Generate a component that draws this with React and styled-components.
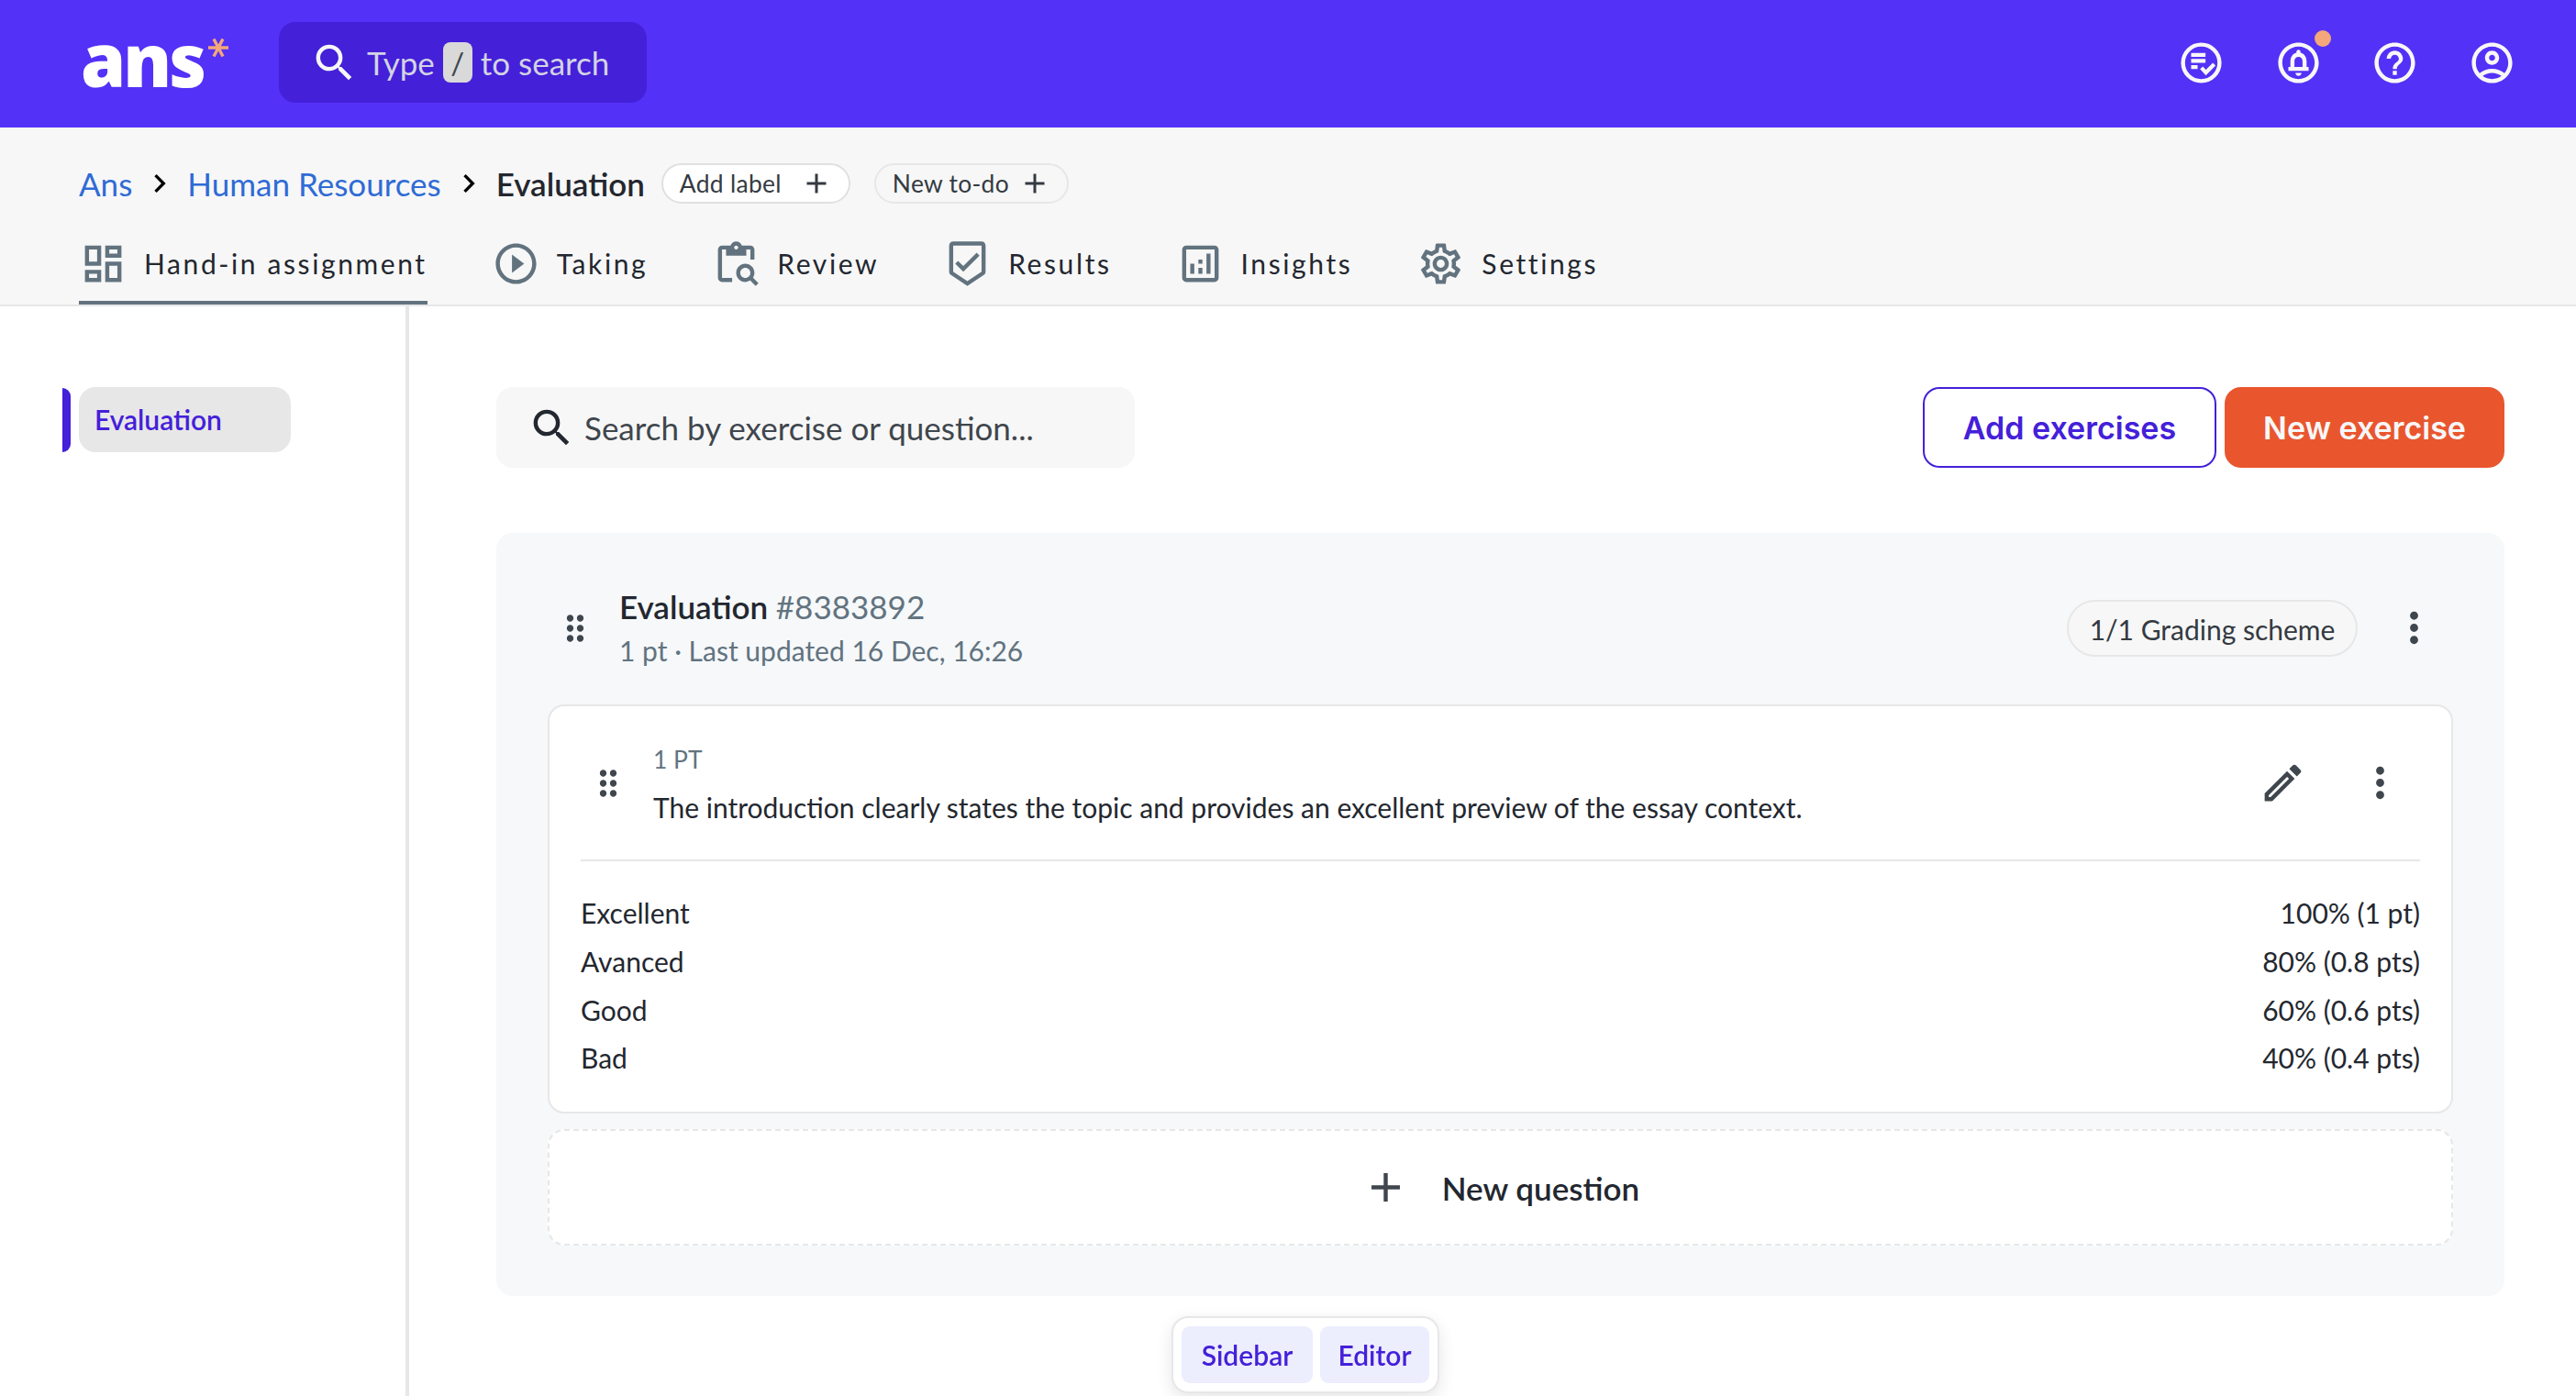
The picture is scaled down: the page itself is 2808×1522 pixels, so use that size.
import styled, { createGlobalStyle } from 'styled-components'
import {
	MdSearch,
	MdOutlineCircleNotifications,
	MdHelpOutline,
	MdOutlineAccountCircle,
	MdChevronRight,
	MdAdd,
	MdOutlineDashboard,
	MdPlayCircleOutline,
	MdOutlineSettings,
	MdDragIndicator,
	MdMoreVert,
	MdOutlineEdit,
} from 'react-icons/md'

const GlobalStyle = createGlobalStyle`
	* {
		box-sizing: border-box;
	}
	body {
		margin: 0;
		background: #fff;
		color: #23272f;
		font-family: Lato, "Open Sans", sans-serif;
		font-size: 30px;
		overflow: hidden;
	}
	svg {
		display: block;
		flex: none;
	}
	button {
		font: inherit;
		color: inherit;
		padding: 0;
		white-space: nowrap;
	}
`

const Page = styled.div`
	display: flex;
	flex-direction: column;
	height: 1522px;
`

/* top bar */
const TopBar = styled.header`
	display: flex;
	align-items: center;
	height: 139px;
	flex: none;
	padding: 0 65px 3px 88px;
	background: #5331f7;
	color: #f7f7f7;
`
const Logo = styled.div`
	display: flex;
	align-items: flex-start;
	gap: 9px;
	width: 216px;
	height: 88px;
`
const LogoText = styled.span`
	width: 130px;
	font-family: "Open Sans", sans-serif;
	font-size: 79px;
	font-weight: 800;
	line-height: 82px;
	letter-spacing: -3px;
	color: #fff;
`
const Star = styled.svg`
	width: 22px;
	height: 22px;
	margin-top: 17px;
	stroke: #f3a77a;
	stroke-width: 3.4;
`
const GlobalSearch = styled.div`
	display: flex;
	align-items: center;
	width: 401px;
	height: 88px;
	padding-left: 34px;
	border-radius: 18px;
	background: #4420d9;
	font-size: 35px;
	white-space: nowrap;
`
const Hint = styled.span`
	margin-left: ${p => p.$left}px;
	letter-spacing: ${p => p.$track}px;
	color: #d3d3e2;
`
const Key = styled.kbd`
	display: flex;
	align-items: center;
	justify-content: center;
	width: 32px;
	height: 44px;
	margin-left: 9px;
	border-radius: 8px;
	background: #d9d9d9;
	color: #3f464d;
	font-family: inherit;
	font-size: 33px;
`
const Actions = styled.div`
	display: flex;
	gap: 52.6px;
	margin-left: auto;
`
const Action = styled.div`
	position: relative;
`
const Badge = styled.span`
	position: absolute;
	top: -9px;
	right: -9px;
	width: 18px;
	height: 18px;
	border-radius: 50%;
	background: #f3a77a;
`

/* breadcrumb and tabs */
const SubHeader = styled.div`
	flex: none;
	height: 195px;
	padding: 39px 86px 0;
	background: #f7f7f7;
	border-bottom: 2px solid #e7e7e7;
`
const Crumbs = styled.nav`
	display: flex;
	align-items: center;
	gap: 10px;
	height: 44px;
	font-size: 35px;
	color: #000;
	white-space: nowrap;
`
const Crumb = styled.span`
	color: ${p => p.$current ? '#23272f' : '#2f6bd6'};
	font-weight: ${p => p.$current ? 600 : 400};
	letter-spacing: ${p => p.$track}px;
`
const Pill = styled.button`
	display: flex;
	align-items: center;
	justify-content: space-between;
	width: ${p => p.$w}px;
	height: 44px;
	margin-left: ${p => p.$left}px;
	padding: 0 17px 0 18px;
	border: 2px solid ${p => p.$plain ? '#e7e7e7' : '#e0e0e0'};
	border-radius: 22px;
	background: ${p => p.$plain ? '#f7f7f7' : '#fff'};
	color: #343a41;
	font-size: 26.4px;
	letter-spacing: 0.3px;
`
const Tabs = styled.div`
	display: flex;
	gap: 70px;
	height: 86px;
	margin-top: 24px;
`
const Tab = styled.div`
	display: flex;
	align-items: center;
	gap: 18px;
	border-bottom: 4px solid ${p => p.$active ? '#62737f' : 'transparent'};
	letter-spacing: 2.6px;
	white-space: nowrap;
	svg {
		color: #62737f;
	}
`

/* body */
const Body = styled.div`
	display: flex;
	flex: 1;
`
const Sidebar = styled.aside`
	width: 446px;
	padding: 88px 0 0 68px;
	border-right: 4px solid #e7e7e7;
`
const SideRow = styled.div`
	display: flex;
	align-items: center;
	gap: 9px;
`
const Marker = styled.div`
	width: 9px;
	height: 70px;
	border-radius: 0 9px 9px 0;
	background: #4420d9;
`
const SideItem = styled.div`
	width: 231px;
	height: 71px;
	padding-left: 17px;
	border-radius: 18px;
	background: #e7e7e7;
	color: #4420d9;
	font-weight: 600;
	line-height: 71px;
`
const Main = styled.main`
	flex: 1;
	padding: 88px 78px 0 95px;
`
const Toolbar = styled.div`
	display: flex;
	align-items: center;
	gap: 9px;
`
const SearchField = styled.div`
	display: flex;
	align-items: center;
	gap: 9px;
	width: 696px;
	height: 88px;
	margin-right: auto;
	padding-left: 34px;
	border-radius: 18px;
	background: #f7f7f7;
	font-size: 35px;
	span {
		color: #3f464d;
	}
`
const Button = styled.button`
	width: ${p => p.$w}px;
	height: 88px;
	border: 2px solid ${p => p.$primary ? '#e9562e' : '#4420d9'};
	border-radius: 18px;
	background: ${p => p.$primary ? '#e9562e' : '#fff'};
	color: ${p => p.$primary ? '#f7f7f7' : '#4420d9'};
	font-family: Inter, sans-serif;
	font-size: 34px;
	font-weight: 600;
`
const Exercise = styled.section`
	height: 832px;
	margin-top: 71px;
	padding: 0 56px;
	border-radius: 18px;
	background: #f6f8fa;
`
const ExerciseHead = styled.div`
	display: flex;
	align-items: center;
	height: 187px;
	padding: 20px 16px 0 8px;
	color: #3f464d;
`
const Heading = styled.div`
	flex: 1;
	margin-left: 26px;
	line-height: 48px;
`
const Title = styled.div`
	font-size: 35px;
	font-weight: 600;
	color: #23272f;
	span {
		font-weight: 400;
		color: #62737f;
	}
`
const Meta = styled.div`
	color: #62737f;
`
const Scheme = styled.div`
	width: 317px;
	height: 62px;
	margin-right: 35px;
	border: 2px solid #e7e7e7;
	border-radius: 31px;
	background: #f7f7f7;
	color: #343a41;
	line-height: 60px;
	text-align: center;
`
const Card = styled.div`
	height: 446px;
	padding: 0 34px;
	border: 2px solid #e7e7e7;
	border-radius: 18px;
	background: #fff;
`
const QuestionHead = styled.div`
	display: flex;
	align-items: center;
	height: 169px;
	padding: 0 17px 0 8px;
	border-bottom: 2px solid #e7e7e7;
	color: #3f464d;
`
const QuestionText = styled.div`
	flex: 1;
	margin-left: 27px;
	color: #23272f;
	line-height: 52px;
`
const Points = styled.div`
	font-size: 26.4px;
	color: #62737f;
`
const CardActions = styled.div`
	display: flex;
	gap: 53px;
`
const Levels = styled.div`
	padding-top: 30px;
`
const Level = styled.div`
	display: flex;
	justify-content: space-between;
	line-height: 52.8px;
`
const NewQuestion = styled.button`
	display: flex;
	align-items: center;
	justify-content: center;
	gap: 35px;
	width: 100%;
	height: 127px;
	margin-top: 17px;
	border: 2px dashed #e7e7e7;
	border-radius: 18px;
	background: #fff;
	font-size: 35px;
	font-weight: 600;
	svg {
		color: #3f464d;
	}
`
const Switcher = styled.div`
	position: fixed;
	left: 1277px;
	bottom: 3px;
	display: flex;
	gap: 8px;
	padding: 9px;
	border: 2px solid #e7e7e7;
	border-radius: 18px;
	background: #fff;
	box-shadow: 0 6px 18px rgba(0, 0, 0, 0.1);
`
const Switch = styled.button`
	width: ${p => p.$w}px;
	height: 62px;
	border: 0;
	border-radius: 9px;
	background: #ecedfd;
	color: #4420d9;
	font-weight: 600;
`

const TodoIcon = () => (
	<svg width="53" height="53" viewBox="0 0 24 24" fill="none" stroke="currentColor" strokeWidth="1.9">
		<circle cx="12" cy="12" r="9" strokeWidth="2" />
		<path d="M7 8.1h7.1M7 11h7.1M7 14.1h3.2M12.1 14.4l2.2 2.4 4.1-4.1" />
	</svg>
)

const ReviewIcon = () => (
	<svg width="53" height="53" viewBox="0 0 24 24" fill="currentColor">
		<path d="M5 5h2v3h10V5h2v5h2V5c0-1.1-.9-2-2-2h-4.18C14.4 1.84 13.3 1 12 1s-2.4.84-2.82 2H5c-1.1 0-2 .9-2 2v14c0 1.1.9 2 2 2h5v-2H5V5zm7-2c.55 0 1 .45 1 1s-.45 1-1 1-1-.45-1-1 .45-1 1-1z" />
		<path d="M20.3 18.9c.4-.7.7-1.5.7-2.4 0-2.5-2-4.5-4.5-4.5S12 14 12 16.5s2 4.5 4.5 4.5c.9 0 1.7-.3 2.4-.7l2.7 2.7 1.4-1.4-2.7-2.7zm-3.8.1c-1.4 0-2.5-1.1-2.5-2.5s1.1-2.5 2.5-2.5 2.5 1.1 2.5 2.5-1.1 2.5-2.5 2.5z" />
	</svg>
)

const ResultsIcon = () => (
	<svg width="53" height="53" viewBox="0 0 24 24" fill="currentColor">
		<path d="M19 1H5c-1.1 0-1.99.9-1.99 2L3 15.93c0 .69.35 1.3.88 1.66L12 23l8.11-5.41c.53-.36.88-.97.88-1.66L21 3c0-1.1-.9-2-2-2zm-7 19.6l-7-4.66V3h14v12.93l-7 4.67zm-2.01-7.42l-2.58-2.59L6 12l4 4 8-8-1.42-1.42z" />
	</svg>
)

const InsightsIcon = () => (
	<svg width="53" height="53" viewBox="0 0 24 24" fill="currentColor">
		<path d="M19 3H5c-1.1 0-2 .9-2 2v14c0 1.1.9 2 2 2h14c1.1 0 2-.9 2-2V5c0-1.1-.9-2-2-2zm0 16H5V5h14v14z" />
		<path d="M7 12h2v5H7zM15 7h2v10h-2zM11 14h2v3h-2zM11 10h2v2h-2z" />
	</svg>
)

const tabs = [
	{ name: 'Hand-in assignment', icon: MdOutlineDashboard },
	{ name: 'Taking', icon: MdPlayCircleOutline },
	{ name: 'Review', icon: ReviewIcon },
	{ name: 'Results', icon: ResultsIcon },
	{ name: 'Insights', icon: InsightsIcon },
	{ name: 'Settings', icon: MdOutlineSettings },
]

const levels = [
	['Excellent', '100% (1 pt)'],
	['Avanced', '80% (0.8 pts)'],
	['Good', '60% (0.6 pts)'],
	['Bad', '40% (0.4 pts)'],
]

const Header = () => (
	<TopBar>
		<Logo>
			<LogoText>ans</LogoText>
			<Star viewBox="0 0 22 22">
				<path d="M0 11h22M6 1.5l10 19M16 1.5l-10 19" />
			</Star>
		</Logo>
		<GlobalSearch>
			<MdSearch size={53} />
			<Hint $left={9} $track={0}>Type</Hint>
			<Key>/</Key>
			<Hint $left={9} $track={0}>to search</Hint>
		</GlobalSearch>
		<Actions>
			<Action><TodoIcon /></Action>
			<Action><MdOutlineCircleNotifications size={53} /><Badge /></Action>
			<Action><MdHelpOutline size={53} /></Action>
			<Action><MdOutlineAccountCircle size={53} /></Action>
		</Actions>
	</TopBar>
)

const App = () => {
	return (
		<Page>
			<GlobalStyle />
			<Header />
			<SubHeader>
				<Crumbs>
					<Crumb $track={0}>Ans</Crumb>
					<MdChevronRight size={40} />
					<Crumb $track={0}>Human Resources</Crumb>
					<MdChevronRight size={40} />
					<Crumb $current $track={0}>Evaluation</Crumb>
					<Pill $w={206} $left={8}>Add label<MdAdd size={36} /></Pill>
					<Pill $w={212} $left={16} $plain>New to-do<MdAdd size={36} /></Pill>
				</Crumbs>
				<Tabs>
					{tabs.map(({ name, icon: Icon }, i) => (
						<Tab key={name} $active={i === 0}>
							<Icon size={53} />
							{name}
						</Tab>
					))}
				</Tabs>
			</SubHeader>
			<Body>
				<Sidebar>
					<SideRow>
						<Marker />
						<SideItem>Evaluation</SideItem>
					</SideRow>
				</Sidebar>
				<Main>
					<Toolbar>
						<SearchField>
							<MdSearch size={53} />
							<span>Search by exercise or question...</span>
						</SearchField>
						<Button $w={320}>Add exercises</Button>
						<Button $w={305} $primary>New exercise</Button>
					</Toolbar>
					<Exercise>
						<ExerciseHead>
							<MdDragIndicator size={44} />
							<Heading>
								<Title>Evaluation <span>#8383892</span></Title>
								<Meta>1 pt · Last updated 16 Dec, 16:26</Meta>
							</Heading>
							<Scheme>1/1 Grading scheme</Scheme>
							<MdMoreVert size={53} />
						</ExerciseHead>
						<Card>
							<QuestionHead>
								<MdDragIndicator size={44} />
								<QuestionText>
									<Points>1 PT</Points>
									The introduction clearly states the topic and provides an excellent preview of the essay context.
								</QuestionText>
								<CardActions>
									<MdOutlineEdit size={53} />
									<MdMoreVert size={53} />
								</CardActions>
							</QuestionHead>
							<Levels>
								{levels.map(([name, score]) => (
									<Level key={name}>
										<span>{name}</span>
										<span>{score}</span>
									</Level>
								))}
							</Levels>
						</Card>
						<NewQuestion>
							<MdAdd size={53} />
							New question
						</NewQuestion>
					</Exercise>
				</Main>
			</Body>
			<Switcher>
				<Switch $w={143}>Sidebar</Switch>
				<Switch $w={119}>Editor</Switch>
			</Switcher>
		</Page>
	)
}

export default App;
